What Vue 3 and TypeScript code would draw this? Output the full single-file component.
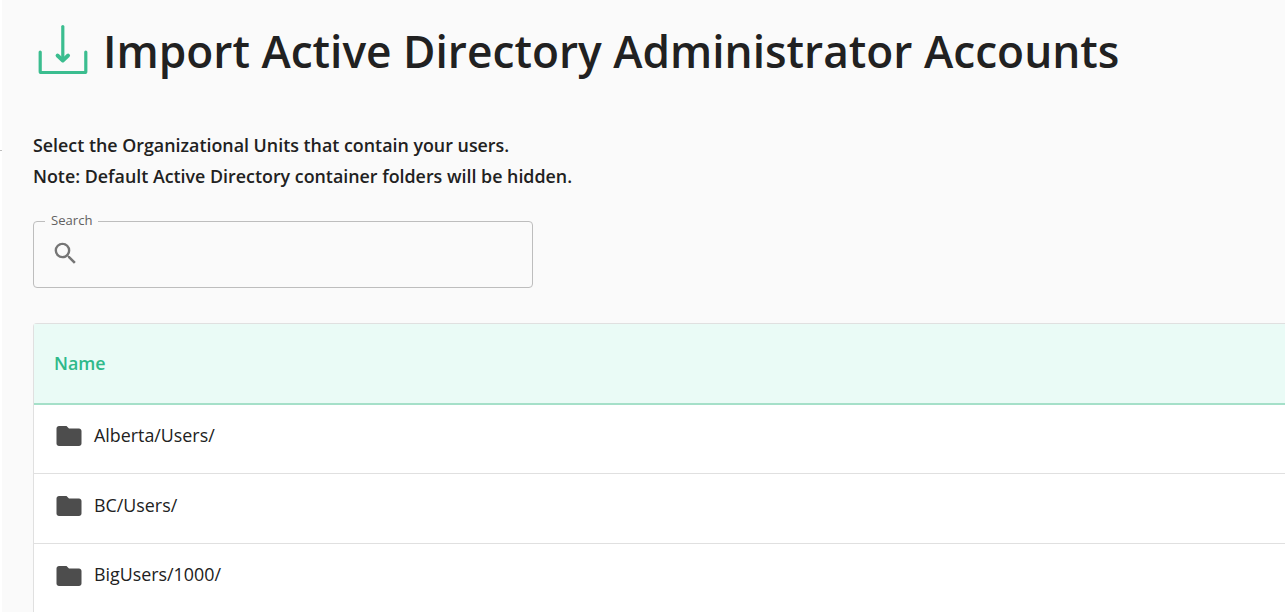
<script setup lang="ts">
const rows: string[] = ['Alberta/Users/', 'BC/Users/', 'BigUsers/1000/']
</script>

<template>
  <div class="page">
    <span class="edge-tick"></span>
    <main class="content">
      <header class="title">
        <svg class="import" width="52" height="52" viewBox="0 0 52 52" fill="none" stroke="#3bbd8f" stroke-width="3.2" stroke-linecap="round" stroke-linejoin="round">
          <path d="M24.8 2.5V35.5" />
          <path d="M19.5 31.5 24.8 36.5 30.1 31.5" stroke-width="3.8" />
          <path d="M2.2 28V47.5Q2.2 48.5 3.2 48.5H46.8Q47.8 48.5 47.8 47.5V28" />
        </svg>
        <h1>Import Active Directory Administrator Accounts</h1>
      </header>
      <p class="intro">Select the Organizational Units that contain your users.</p>
      <p class="intro second">Note: Default Active Directory container folders will be hidden.</p>
      <fieldset class="search">
        <legend>Search</legend>
        <svg width="29" height="29" viewBox="0 0 24 24" fill="#757575">
          <path d="M15.5 14h-.79l-.28-.27A6.47 6.47 0 0 0 16 9.5 6.5 6.5 0 1 0 9.5 16c1.61 0 3.09-.59 4.23-1.57l.27.28v.79l5 4.99L20.49 19l-4.99-5zm-6 0C7.01 14 5 11.99 5 9.5S7.01 5 9.5 5 14 7.01 14 9.5 11.99 14 9.5 14z" />
        </svg>
      </fieldset>
      <section class="table">
        <div class="head">Name</div>
        <div v-for="row in rows" :key="row" class="row">
          <svg width="30" height="30" viewBox="0 0 24 24" fill="#4d4d4d">
            <path d="M10 4H4c-1.1 0-2 .9-2 2v12c0 1.1.9 2 2 2h16c1.1 0 2-.9 2-2V8c0-1.1-.9-2-2-2h-8l-2-2z" />
          </svg>
          <span>{{ row }}</span>
        </div>
      </section>
    </main>
  </div>
</template>

<style>
html, body { margin: 0; height: 100%; overflow: hidden; background: #fff; }
</style>

<style scoped>
.page {
  position: relative;
  height: 612px;
  overflow: hidden;
  padding-left: 2px;
  background: #fff;
  font-family: "Open Sans", sans-serif;
  color: #212121;
}
.edge-tick {
  position: absolute;
  left: 0;
  top: 150px;
  width: 2px;
  height: 1px;
  background: #bdbdbd;
}
.content {
  height: 100%;
  background: #fafafa;
  padding: 24px 0 0 31px;
}
.title {
  display: flex;
  align-items: center;
  gap: 13px;
  padding-left: 5px;
  height: 52px;
}
.import { flex: none; }
h1 {
  margin: 0;
  padding-top: 2px;
  font-size: 44.25px;
  line-height: 54px;
  font-weight: 600;
  white-space: nowrap;
}
.intro {
  margin: 57px 0 0;
  font-size: 17.85px;
  line-height: 24px;
  font-weight: 600;
}
.intro.second { margin-top: 7px; }
.search {
  box-sizing: border-box;
  width: 500px;
  height: 75px;
  margin: 25px 0 0;
  padding: 0 0 0 17px;
  border: 1px solid #bdbdbd;
  border-radius: 4px;
  display: block;
}
.search legend {
  margin-left: -6px;
  padding: 0 6px 2px;
  font-size: 13.1px;
  line-height: 14px;
  color: #616161;
}
.search svg { display: block; margin-top: 10px; }
.table {
  margin-top: 35px;
  background: #fff;
  border: 1px solid #e0e0e0;
  border-right: 0;
  border-bottom: 0;
  border-radius: 4px 0 0 0;
}
.head {
  height: 78.6px;
  display: flex;
  align-items: center;
  padding-left: 20px;
  background: #eafbf6;
  border-bottom: 2px solid #a5e0c9;
  color: #2fb98a;
  font-size: 17.85px;
  font-weight: 600;
}
.row {
  display: flex;
  align-items: center;
  gap: 10px;
  height: 60.3px;
  padding: 0 0 8.5px 20px;
  border-bottom: 1px solid #e0e0e0;
  font-size: 17.85px;
}
.row svg { margin-top: 3.5px; }
</style>
